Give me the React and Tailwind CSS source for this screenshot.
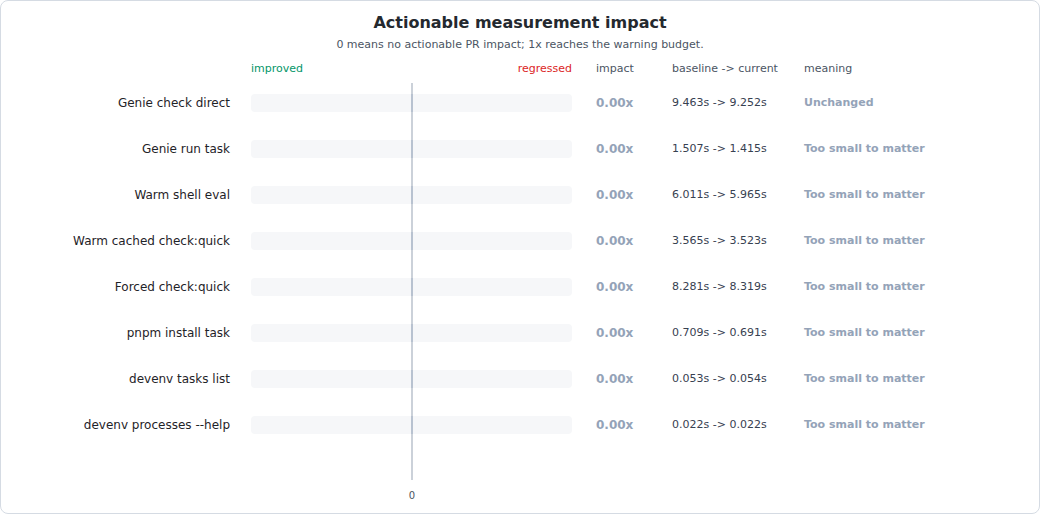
import React from "react";

const rows = [
  ["Genie check direct", "9.463s -> 9.252s", "Unchanged"],
  ["Genie run task", "1.507s -> 1.415s", "Too small to matter"],
  ["Warm shell eval", "6.011s -> 5.965s", "Too small to matter"],
  ["Warm cached check:quick", "3.565s -> 3.523s", "Too small to matter"],
  ["Forced check:quick", "8.281s -> 8.319s", "Too small to matter"],
  ["pnpm install task", "0.709s -> 0.691s", "Too small to matter"],
  ["devenv tasks list", "0.053s -> 0.054s", "Too small to matter"],
  ["devenv processes --help", "0.022s -> 0.022s", "Too small to matter"],
];

export default function App() {
  return (
    <div
      className="w-[1040px] h-[514px] bg-white text-[#1f2937]"
      style={{ fontFamily: "'DejaVu Sans', sans-serif" }}
    >
      <div className="w-full h-full rounded-lg border border-[#d5dbe3] flex flex-col">
        <div className="pt-[12px] text-center text-[16px] font-bold leading-[20px] text-[#24292f]">
          Actionable measurement impact
        </div>
        <div className="mt-[3px] text-center text-[11px] leading-[18px] text-[#4b5563]">
          0 means no actionable PR impact; 1x reaches the warning budget.
        </div>
        <div className="mt-[7px] flex h-[16px] items-center text-[11px] leading-[16px]">
          <div className="w-[250px] shrink-0" />
          <div className="w-[321px] shrink-0 flex justify-between">
            <span className="text-[#059669]">improved</span>
            <span className="text-[#dc2626]">regressed</span>
          </div>
          <div className="w-[24px] shrink-0" />
          <div className="w-[76px] shrink-0 text-[#4b5563]">impact</div>
          <div className="w-[132px] shrink-0 text-[#4b5563]">baseline -&gt; current</div>
          <div className="text-[#4b5563]">meaning</div>
        </div>
        <div className="relative mt-[3px]">
          <div className="absolute left-[410px] top-[3px] h-[397px] w-[2px] bg-[#cbd1d9]" />
          {rows.map(([label, base, meaning]) => (
            <div key={label} className="flex h-[46px] items-center">
              <div className="w-[229px] shrink-0 text-right text-[12px] text-[#1f2328]">{label}</div>
              <div className="w-[21px] shrink-0" />
              <div className="relative w-[321px] shrink-0 h-[18px] rounded bg-[#f6f7f9]">
                <div className="absolute left-[160px] top-0 h-[18px] w-[2px] bg-[#b8c2d0]" />
              </div>
              <div className="w-[24px] shrink-0" />
              <div className="w-[76px] shrink-0 text-[12px] font-bold text-[#94a3b8]">0.00x</div>
              <div className="w-[132px] shrink-0 text-[11px] text-[#374151]">{base}</div>
              <div className="text-[11px] font-bold text-[#94a3b8]">{meaning}</div>
            </div>
          ))}
          <div className="mt-[40px] ml-[406px] w-[10px] text-center text-[10px] text-[#4b5563]">0</div>
        </div>
      </div>
    </div>
  );
}
